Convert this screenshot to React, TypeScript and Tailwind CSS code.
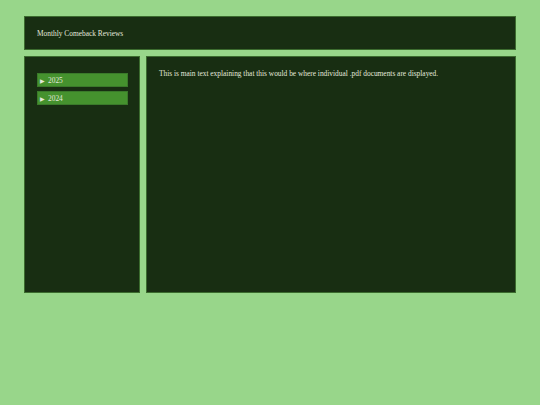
import React from 'react';

const years = ['2025', '2024'];

export default function App() {
  return (
    <div
      className="w-[540px] h-[405px] bg-[#98d68a] px-6 pt-4 text-[7.4px] leading-[10px] text-[#e2e8dc]"
      style={{ fontFamily: '"Liberation Serif", "Times New Roman", serif' }}
    >
      <header className="h-[34px] flex items-center pl-3 pt-[2px] bg-[#182e12] border border-[#3b6b2e]">
        Monthly Comeback Reviews
      </header>
      <div className="mt-[6px] flex gap-[6px] h-[237px]">
        <aside className="w-[116px] shrink-0 bg-[#182e12] border border-[#3b6b2e] pt-4 pl-3 pr-[11px] flex flex-col gap-1">
          {years.map((y) => (
            <button
              key={y}
              className="h-[14px] flex items-center gap-[3px] pl-[2px] pt-[1px] bg-[#45922e] border border-[#3a7a2a] text-left text-[#e2e8dc]"
            >
              <span className="text-[6px]">▶</span>
              <span>{y}</span>
            </button>
          ))}
        </aside>
        <main className="flex-1 bg-[#182e12] border border-[#3b6b2e] pt-[12px] pl-3">
          <p>This is main text explaining that this would be where individual .pdf documents are displayed.</p>
        </main>
      </div>
    </div>
  );
}
